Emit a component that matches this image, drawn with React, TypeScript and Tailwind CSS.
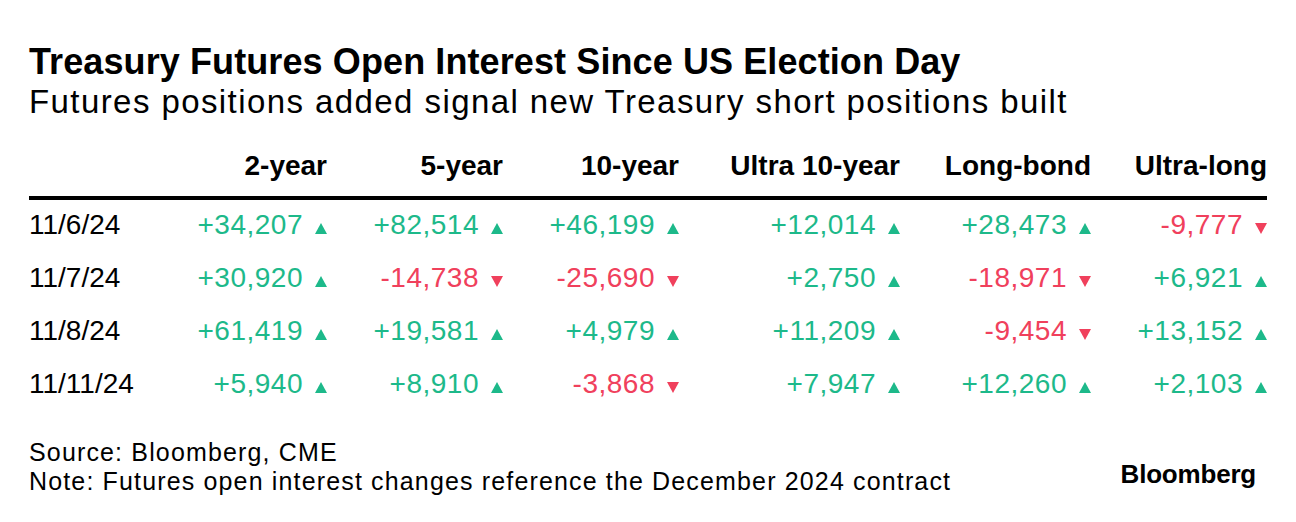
const columns = ["2-year", "5-year", "10-year", "Ultra 10-year", "Long-bond", "Ultra-long"];

const rows: { date: string; values: number[] }[] = [
  { date: "11/6/24", values: [34207, 82514, 46199, 12014, 28473, -9777] },
  { date: "11/7/24", values: [30920, -14738, -25690, 2750, -18971, 6921] },
  { date: "11/8/24", values: [61419, 19581, 4979, 11209, -9454, 13152] },
  { date: "11/11/24", values: [5940, 8910, -3868, 7947, 12260, 2103] },
];

const fmt = (n: number) => (n > 0 ? "+" : "-") + Math.abs(n).toLocaleString("en-US");

const Arrow = ({ up }: { up: boolean }) => (
  <svg width="12" height="11" viewBox="0 0 12 11" className="ml-[12px] shrink-0">
    {up ? <polygon points="6,0 12,11 0,11" fill="#1db98a" /> : <polygon points="0,0 12,0 6,11" fill="#f0405c" />}
  </svg>
);

const App = () => {
  return (
    <div
      className="w-[1296px] h-[522px] bg-white text-black pl-[29px] pt-[42px]"
      style={{ fontFamily: '"Liberation Sans", Arial, sans-serif' }}
    >
      <h1 className="text-[36px] leading-[40px] font-bold tracking-[0.1px]">
        Treasury Futures Open Interest Since US Election Day
      </h1>
      <p className="text-[33px] leading-[40px] tracking-[1.42px]">
        Futures positions added signal new Treasury short positions built
      </p>

      {/* table */}
      <div className="w-[1238px] mt-[27px]">
        <div className="grid grid-cols-[122px_176px_176px_176px_221px_191px_176px] border-b-4 border-black pb-[13px]">
          <div />
          {columns.map((c) => (
            <div key={c} className="text-right text-[28px] leading-[34px] font-bold">
              {c}
            </div>
          ))}
        </div>
        {rows.map((r) => (
          <div
            key={r.date}
            className="grid grid-cols-[122px_176px_176px_176px_221px_191px_176px] h-[53px] text-[28px] leading-[49px]"
          >
            <div>{r.date}</div>
            {r.values.map((v, i) => (
              <div
                key={i}
                className={`flex justify-end items-baseline tracking-[0.5px] ${v > 0 ? "text-[#1db98a]" : "text-[#f0405c]"}`}
              >
                <span>{fmt(v)}</span>
                <Arrow up={v > 0} />
              </div>
            ))}
          </div>
        ))}
      </div>

      {/* footer */}
      <div className="w-[1238px] mt-[26px] flex justify-between items-end">
        <div className="text-[25px] leading-[29px] tracking-[1.15px]">
          <div>Source: Bloomberg, CME</div>
          <div>Note: Futures open interest changes reference the December 2024 contract</div>
        </div>
        <div className="text-[26px] leading-[30px] font-bold tracking-[-0.2px] mb-[7px] mr-[11px]">Bloomberg</div>
      </div>
    </div>
  );
};

export default App;
